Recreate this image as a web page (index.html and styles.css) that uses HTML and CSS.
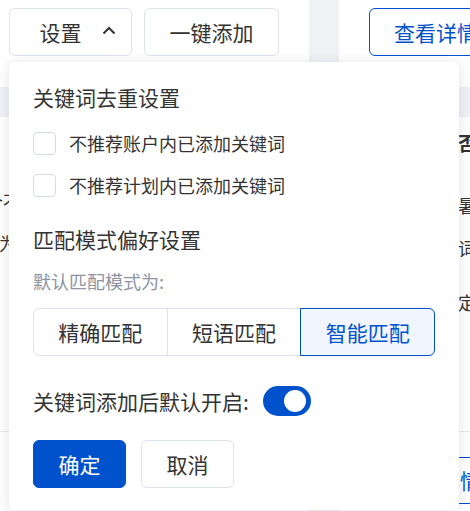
FILE: index.html
```html
<!DOCTYPE html>
<html lang="zh-CN">
<head>
<meta charset="utf-8">
<title>设置</title>
<link rel="stylesheet" href="styles.css">
</head>
<body>
<div class="page">
  <div class="bg">
    <div class="col col-left">
      <div class="toolbar">
        <button class="btn btn-setting">设置<svg class="chev" width="14" height="9" viewBox="0 0 14 9"><polyline points="1.5,7.5 7,2 12.5,7.5" fill="none" stroke="#333" stroke-width="2"/></svg></button>
        <button class="btn btn-add">一键添加</button>
      </div>
      <div class="thead"></div>
      <div class="tbody tbody-left">
        <div class="cell-l r1">每个不</div>
        <div class="cell-l r2">成为</div>
      </div>
      <div class="sep"></div>
    </div>
    <div class="strip"></div>
    <div class="col col-right">
      <div class="toolbar toolbar-right">
        <button class="btn btn-outline">查看详情</button>
      </div>
      <div class="thead"></div>
      <div class="tbody tbody-right">
        <div class="cell-r c1 bold">否</div>
        <div class="cell-r c2">暑</div>
        <div class="cell-r c3">词</div>
        <div class="cell-r c4">定</div>
      </div>
      <div class="sep"></div>
      <div class="bottom-row">
        <button class="btn btn-outline btn-bottom">查看详情</button>
      </div>
    </div>
  </div>

  <div class="popover">
    <div class="section-title">关键词去重设置</div>
    <div class="check-list">
      <label class="check-row"><span class="checkbox"></span><span class="check-label">不推荐账户内已添加关键词</span></label>
      <label class="check-row"><span class="checkbox"></span><span class="check-label">不推荐计划内已添加关键词</span></label>
    </div>
    <div class="section-title title-2">匹配模式偏好设置</div>
    <div class="hint">默认匹配模式为:</div>
    <div class="segmented">
      <div class="seg">精确匹配</div>
      <div class="seg">短语匹配</div>
      <div class="seg seg-active">智能匹配</div>
    </div>
    <div class="toggle-row">
      <span class="toggle-label">关键词添加后默认开启:</span>
      <span class="switch"><span class="knob"></span></span>
    </div>
    <div class="actions">
      <button class="btn btn-primary">确定</button>
      <button class="btn btn-cancel">取消</button>
    </div>
  </div>
</div>
</body>
</html>
```

FILE: styles.css
```css
* { box-sizing: border-box; }
html, body {
  margin: 0;
  padding: 0;
  background: #fff;
}
body {
  font-family: "Noto Sans CJK SC", "Noto Sans", sans-serif;
  color: #333;
}
.page {
  position: relative;
  width: 470px;
  height: 511px;
  overflow: hidden;
}
.bg {
  display: flex;
  height: 511px;
}
.col {
  display: flex;
  flex-direction: column;
}
.col-left {
  width: 309px;
  flex: none;
}
.strip {
  width: 30px;
  flex: none;
  background: #f0f1f5;
}
.col-right {
  flex: 1;
  min-width: 0;
}
.toolbar {
  height: 87px;
  padding: 8px 0 0 9px;
  display: flex;
  align-items: flex-start;
  gap: 12px;
}
.toolbar-right {
  padding-left: 30px;
}
.btn {
  font-family: inherit;
  height: 48px;
  border: 1px solid #dfe3ec;
  border-radius: 6px;
  background: #fff;
  color: #333;
  font-size: 21px;
  line-height: 1;
  padding: 0;
  display: inline-flex;
  align-items: center;
  justify-content: center;
  flex: none;
  cursor: pointer;
}
.btn-setting {
  width: 123px;
  gap: 20px;
  padding-left: 14px;
}
.chev {
  display: block;
  margin-top: -3px;
}
.btn-add {
  width: 135px;
}
.btn-outline {
  border-color: #0052cc;
  color: #0052cc;
  width: 150px;
  justify-content: flex-start;
  padding-left: 24px;
  white-space: nowrap;
}
.thead {
  height: 30px;
  background: #f0f1f5;
}
.tbody {
  position: relative;
  height: 314px;
  font-size: 18px;
}
.tbody-left {
  display: flex;
  flex-direction: column;
  align-items: flex-end;
  padding-top: 74px;
  width: 40px;
  overflow: hidden;
}
.cell-l {
  white-space: nowrap;
  line-height: 20px;
}
.cell-l.r1 {
  margin-right: 19px;
}
.cell-l.r2 {
  margin-top: 22px;
  margin-right: 23px;
}
.tbody-right {
  padding: 16px 0 0 119px;
  display: flex;
  flex-direction: column;
}
.cell-r {
  line-height: 20px;
  white-space: nowrap;
}
.cell-r.bold {
  font-weight: 700;
  font-size: 19px;
}
.c2 { margin-top: 42px; }
.c3 { margin-top: 23px; }
.c4 { margin-top: 34px; }
.sep {
  height: 1px;
  background: #e6e8ee;
}
.bottom-row {
  padding: 25px 0 0 0;
}
.btn-bottom {
  height: 47px;
  margin-left: 20px;
  width: 200px;
  padding-left: 37px;
}

/* popover */
.popover {
  position: absolute;
  left: 9px;
  top: 62px;
  width: 450px;
  background: #fff;
  border-radius: 6px;
  box-shadow: 0 2px 14px rgba(30, 40, 60, 0.13);
  padding: 24px 24px 22px 24px;
}
.section-title {
  font-size: 21px;
  line-height: 22px;
  color: #333;
}
.title-2 {
  margin-top: 31px;
}
.check-list {
  margin-top: 23px;
  display: flex;
  flex-direction: column;
  gap: 18px;
}
.check-row {
  display: flex;
  align-items: center;
  height: 24px;
}
.checkbox {
  width: 23px;
  height: 23px;
  border: 1px solid #d5dae4;
  border-radius: 4px;
  background: #fff;
  flex: none;
}
.check-label {
  margin-left: 13px;
  font-size: 18px;
  line-height: 24px;
  color: #333;
}
.hint {
  margin-top: 22px;
  font-size: 18px;
  line-height: 18px;
  color: #8d95a5;
}
.segmented {
  margin-top: 18px;
  width: 402px;
  height: 48px;
  display: flex;
  border: 1px solid #dfe3ec;
  border-radius: 6px;
  position: relative;
}
.seg {
  flex: 1;
  display: flex;
  align-items: center;
  justify-content: center;
  font-size: 21px;
  color: #333;
  border-left: 1px solid #dfe3ec;
}
.seg:first-child {
  border-left: none;
}
.seg-active {
  margin: -1px -1px -1px 0;
  border: 1px solid #0052cc;
  border-radius: 0 6px 6px 0;
  background: #f0f5ff;
  color: #0052cc;
}
.toggle-row {
  margin-top: 30px;
  height: 30px;
  display: flex;
  align-items: center;
}
.toggle-label {
  font-size: 21px;
  line-height: 22px;
}
.switch {
  margin-left: 14px;
  width: 48px;
  height: 30px;
  border-radius: 15px;
  background: #0052cc;
  display: flex;
  align-items: center;
  justify-content: flex-end;
  padding-right: 5px;
}
.knob {
  width: 22px;
  height: 22px;
  border-radius: 50%;
  background: #fff;
}
.actions {
  margin-top: 24px;
  display: flex;
  gap: 15px;
}
.btn-primary {
  width: 93px;
  background: #0052cc;
  border-color: #0052cc;
  color: #fff;
}
.btn-cancel {
  width: 93px;
}
```
